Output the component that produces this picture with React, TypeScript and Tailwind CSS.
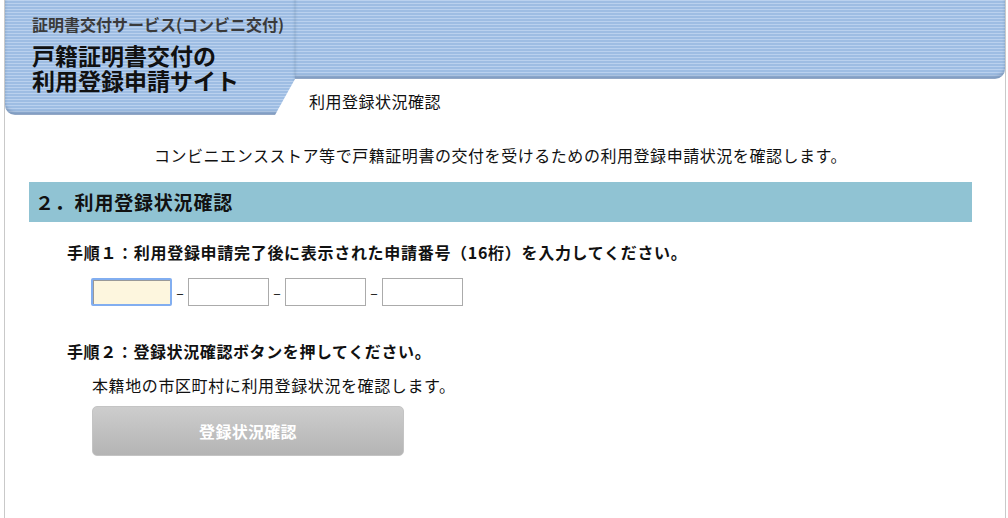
import { useState } from "react";

const stripes =
  "bg-[image:repeating-linear-gradient(180deg,#bad1ee_0px,#bad1ee_1.5px,#9ebde3_1.5px,#9ebde3_3px)]";

function Header() {
  return (
    <div className="flex h-[115px]">
      <div
        className={`${stripes} w-[290px] shrink-0 h-[115px] rounded-bl-[10px] pl-[27px] pt-[12px] shadow-[inset_0_-3px_3px_rgba(70,90,120,0.35)] [clip-path:polygon(0_0,100%_0,100%_79px,270px_100%,0_100%)]`}
      >
        <div className="text-[16px] leading-[24px] font-bold text-[#3a3a3a]">
          証明書交付サービス(コンビニ交付)
        </div>
        <div className="mt-[7px] text-[23px] leading-[25px] font-bold text-[#111]">
          戸籍証明書交付の
          <br />
          利用登録申請サイト
        </div>
      </div>
      <div className="flex-1 flex flex-col">
        <div
          className={`${stripes} h-[79px] rounded-br-[10px] shadow-[inset_0_-3px_3px_rgba(70,90,120,0.35)]`}
        />
        <div className="pl-[14px] pt-[12px] text-[16px] leading-[20px] tracking-[0.5px] text-[#111]">
          利用登録状況確認
        </div>
      </div>
    </div>
  );
}

export default function App() {
  const [parts, setParts] = useState(["", "", "", ""]);

  const update = (i: number, v: string) => {
    setParts((prev) => prev.map((p, j) => (j === i ? v : p)));
  };

  return (
    <div
      className="ml-[4px] w-[1002px] min-h-[518px] border-x border-[#c9c9c9] bg-white text-[#111]"
      style={{ fontFamily: '"Noto Sans CJK JP", "Noto Sans", sans-serif' }}
    >
      <Header />

      <div className="ml-[24px] w-[943px]">
        <p className="mt-[28px] text-center text-[16px] leading-[24px] tracking-[0.55px]">
          コンビニエンスストア等で戸籍証明書の交付を受けるための利用登録申請状況を確認します。
        </p>

        <h2 className="mt-[15px] h-[40px] bg-[#90c3d3] pl-[6px] flex items-center text-[19px] font-bold tracking-[0.8px]">
          ２．利用登録状況確認
        </h2>

        <div className="pl-[38px]">
          <p className="mt-[18px] text-[16px] leading-[24px] font-bold tracking-[0.7px]">
            手順１：利用登録申請完了後に表示された申請番号（16桁）を入力してください。
          </p>

          <div className="mt-[14px] ml-[24px] flex items-center">
            {parts.map((p, i) => (
              <div key={i} className="flex items-center">
                {i > 0 && (
                  <span className="w-[16px] text-center text-[14px] leading-[14px]">–</span>
                )}
                <input
                  type="text"
                  value={p}
                  maxLength={4}
                  onChange={(e) => update(i, e.target.value)}
                  className={
                    i === 0
                      ? "w-[81px] h-[28px] px-[3px] bg-[#fdf6de] border-2 border-[#82aef0] rounded-[2px] shadow-[inset_1px_1px_0_#999] outline-none text-[15px]"
                      : "w-[81px] h-[28px] px-[3px] bg-white border border-[#ababab] outline-none text-[15px]"
                  }
                />
              </div>
            ))}
          </div>

          <p className="mt-[33px] text-[16px] leading-[24px] font-bold tracking-[0.6px]">
            手順２：登録状況確認ボタンを押してください。
          </p>

          <div className="pl-[25px]">
            <p className="mt-[10px] text-[16px] leading-[24px] tracking-[0.6px]">
              本籍地の市区町村に利用登録状況を確認します。
            </p>
            <button
              type="button"
              disabled
              className="mt-[9px] w-[312px] h-[50px] rounded-[5px] border border-[#c4c4c4] bg-[linear-gradient(180deg,#cdcdcd,#b4b4b4)] text-white text-[16px] font-bold tracking-[0.3px]"
            >
              登録状況確認
            </button>
          </div>
        </div>
      </div>
    </div>
  );
}
